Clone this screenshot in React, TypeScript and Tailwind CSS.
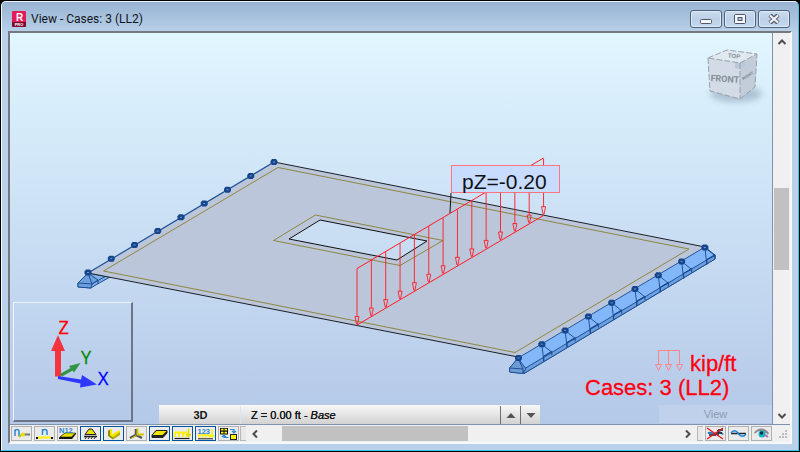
import React from "react";
import clsx from "clsx";

const slabSupports = Array.from({ length: 9 }, (_, i) => i);
const loadArrows = Array.from({ length: 14 }, (_, i) => i);

const displayTools = [
  {
    label: "Node numbers",
    active: false,
    icon: (
      <>
        <path d="M3 9V2.500M3 4C3.500 2 7 2 7 4.500V9.500" stroke="#2b87d1" strokeWidth="1.500" fill="none" />
        <path d="M7 10L10 7.500" stroke="#c8c800" strokeWidth="2" />
        <path d="M12 7.500H18" stroke="#777" strokeWidth="2" />
        <circle cx="11" cy="7.500" r="2" fill="#e6e000" />
      </>
    ),
  },
  {
    label: "Bar numbers",
    active: false,
    icon: (
      <>
        <path d="M7.500 8V2M7.500 4C8 1.800 12 1.800 12 4.500V8" stroke="#2b87d1" strokeWidth="1.500" fill="none" />
        <path d="M3 10.500H16" stroke="#fff200" strokeWidth="2" />
        <path d="M1 11h2M16 11h2" stroke="#111" strokeWidth="2" />
      </>
    ),
  },
  {
    label: "Panel numbers",
    active: false,
    icon: (
      <>
        <path d="M7 6H18V7L14 12H1V10.500Z" fill="#111" />
        <path d="M7 6H17.500L13.500 10H2Z" fill="#e6e000" stroke="#222" strokeWidth=".6" />
        <text x="1" y="6" fontSize="7.500" fontWeight="bold" fill="#2b87d1">N12</text>
      </>
    ),
  },
  {
    label: "Supports",
    active: true,
    icon: (
      <>
        <path d="M8 2H11L15 7.500H4Z" fill="#e6e000" stroke="#222" />
        <path d="M3 9.500H16" stroke="#222" strokeWidth="1.500" />
        <path d="M4 12l1.500-2M7 12l1.500-2M10 12l1.500-2M13 12l1.500-2" stroke="#222" />
      </>
    ),
  },
  {
    label: "Sections",
    active: true,
    icon: (
      <>
        <path d="M5 3L8 1.500V7L16 3V7L9 12L5 9Z" fill="#f2e900" />
        <path d="M4 3.500L6 3V8.500L9 10.500V12.500L4 9Z" fill="#918b00" />
        <path d="M9 10L16 5V8L9 12.500Z" fill="#b6ae00" />
      </>
    ),
  },
  {
    label: "Local axes",
    active: false,
    icon: (
      <>
        <path d="M9 2V8M3 11L9 8L15 11" stroke="#555" strokeWidth="2.500" fill="none" />
        <path d="M10.500 1.500V7.500H17" stroke="#d0c800" strokeWidth="2" fill="none" />
        <path d="M4 11.500L9 8.500" stroke="#d0c800" />
      </>
    ),
  },
  {
    label: "Panel thickness",
    active: true,
    icon: (
      <>
        <path d="M6 3.500H17V6L13 10.500H2V8Z" fill="#222" stroke="#222" />
        <path d="M6.500 4H16.500L12.500 8H2.500Z" fill="#f2e900" />
      </>
    ),
  },
  {
    label: "Loads",
    active: true,
    icon: (
      <>
        <path d="M2 10V5.500H13.500V10M6 5.500V10M10 5.500V10" stroke="#fff200" strokeWidth="1.800" fill="none" />
        <path d="M15.500 1.500V9M13.500 7L15.500 9.500L17.500 7" stroke="#e6dc00" strokeWidth="1.500" fill="none" />
        <path d="M1.500 11.500H16.500" stroke="#222" strokeWidth="1.200" />
      </>
    ),
  },
  {
    label: "Load values",
    active: true,
    icon: (
      <>
        <path d="M3 10.500V8H13.500V10.500M6.500 8V10.500M10 8V10.500M16 2V10M14 8L16 10L18 8" stroke="#fff200" strokeWidth="1.500" fill="none" />
        <path d="M2 11.800H17" stroke="#222" />
        <text x="1.500" y="6.500" fontSize="7.500" fontWeight="bold" fill="#2b87d1">123</text>
      </>
    ),
  },
  {
    label: "Display attributes",
    active: false,
    icon: (
      <>
        <rect x="1" y="1" width="8" height="6.500" fill="#111" />
        <path d="M2 2.700h2.500M5.500 2.700h2.500M2 5.700h2.500M5.500 5.700h2.500" stroke="#fff200" strokeWidth="1.700" />
        <rect x="11.500" y="7.500" width="6" height="5" fill="#fff200" stroke="#222" />
        <path d="M11 2.500H15V5M13 4l2 2 2-2M9.500 10.500H5V8.500M3 10l2-2 2 2" stroke="#2b87d1" strokeWidth="1.200" fill="none" />
      </>
    ),
  },
];

const resultTools = [
  {
    label: "Hide results",
    icon: (
      <>
        <path d="M2 6.500C5 3.500 7 9 10 6.500S15 5 17 7.500" stroke="#2277bb" strokeWidth="2" fill="none" />
        <path d="M3 8H10M12 3H17M12 6H16M12 3V9" stroke="#222" strokeWidth="1.500" />
        <path d="M1 1L17 12M17 1L1 12" stroke="#e8101c" strokeWidth="1.200" />
      </>
    ),
  },
  {
    label: "Deformation",
    icon: (
      <>
        <path d="M2 6.500H17" stroke="#222" strokeWidth="1.500" />
        <path d="M2 6C4 3 7 3 9 6S14 11 17 7" stroke="#1687d9" strokeWidth="1.500" fill="none" />
      </>
    ),
  },
  {
    label: "View settings",
    icon: (
      <>
        <path d="M2 6C5 0 13 0 17 6L15 9C12 4 7 4 4 7Z" fill="#8f8b90" />
        <path d="M3 7C6 3 12 3 16 8C12 12 6 11 3 7Z" fill="#e9e9ee" />
        <circle cx="10" cy="7" r="3.500" fill="#15b5bd" />
        <circle cx="9.500" cy="6" r="1.700" fill="#152b4d" />
        <path d="M13 8L16 10" stroke="#b86bb0" strokeWidth="2" />
      </>
    ),
  },
];

interface ToolProps {
  label: string;
  active?: boolean;
  icon: React.ReactNode;
}

const ToolButton = ({ label, active, icon }: ToolProps) => {
  return (
    <button
      aria-label={label}
      className={clsx(
        "w-[21px] h-[15px] border bg-[#ebebeb] shrink-0",
        active ? "border-[#00539f]" : "border-[#b0b0b0]"
      )}
    >
      <svg viewBox="0 0 19 13" className="block w-full h-full font-['Liberation_Sans',sans-serif]">
        {icon}
      </svg>
    </button>
  );
};

const Chevron = ({ d }: { d: string }) => (
  <svg viewBox="0 0 10 10" className="w-2.5 h-2.5" fill="none" stroke="#4d4d4d" strokeWidth="2">
    <path d={d} />
  </svg>
);

const TitleBar = () => {
  const buttonClass =
    "w-8 h-[18px] rounded-[3px] border border-[#50617c] bg-linear-to-b from-[#cbdcee] via-[#bcd0e7] to-[#c4d8ee] shadow-[inset_0_0_0_1px_#dceafa] flex items-center justify-center";
  return (
    <header className="h-[29px] flex items-center justify-between pt-1 pl-1 pr-0.5 shrink-0">
      <div className="flex items-center gap-[5px]">
        <svg viewBox="0 0 14 16" className="w-3.5 h-4 font-['Liberation_Sans',sans-serif]">
          <rect width="14" height="16" rx="1" fill="#e31b56" />
          <path d="M0 11H14V15a1 1 0 0 1-1 1H1a1 1 0 0 1-1-1Z" fill="#7d0b32" />
          <text x="7.500" y="9.500" fontSize="10" fontWeight="bold" fill="#fff" textAnchor="middle">R</text>
          <text x="7" y="14.500" fontSize="4" fontWeight="bold" fill="#fff" textAnchor="middle">PRO</text>
        </svg>
        <h1 className="text-[12px] leading-4 text-[#10151c]">View - Cases: 3 (LL2)</h1>
      </div>
      <div className="flex gap-0.5">
        <button aria-label="Minimize" className={buttonClass}>
          <svg viewBox="0 0 12 10" className="w-3 h-2.5">
            <rect x=".5" y="5.500" width="11" height="4" rx="1" fill="#f5f7fa" stroke="#4f5868" />
          </svg>
        </button>
        <button aria-label="Maximize" className={buttonClass}>
          <svg viewBox="0 0 12 10" className="w-3 h-2.5">
            <rect x=".5" y=".5" width="11" height="9" rx="1" fill="#f5f7fa" stroke="#4f5868" />
            <rect x="4" y="3.500" width="4" height="3" fill="#a9c3e2" stroke="#4f5868" />
          </svg>
        </button>
        <button aria-label="Close" className={clsx(buttonClass, "border-[#8da3c0]")}>
          <svg viewBox="0 0 12 10" className="w-3 h-2.5">
            <path d="M2 1L10 9M10 1L2 9" stroke="#5c6370" strokeWidth="4.500" />
            <path d="M2 1.500L10 8.500M10 1.500L2 8.500" stroke="#f1f3f6" strokeWidth="2.200" />
          </svg>
        </button>
      </div>
    </header>
  );
};

const ViewCube = () => (
  <g>
    <ellipse cx="736" cy="94" rx="26" ry="8" fill="#7f95ab" opacity=".5" filter="url(#cubeShadow)" />
    <path d="M708 58L740 63L740 99L710 91Z" fill="#d3dce6" />
    <path d="M708 58L727 50L757 54L740 63Z" fill="#e0e8f0" />
    <path d="M740 63L757 54L755 87L740 99Z" fill="#c3cdd9" />
    <path d="M735 62l5 1v6l-5-1zM741 62l4-2v6l-4 2z" fill="#b9c9da" />
    <path
      d="M708 58L727 50L757 54L740 63ZM708 58L710 91L740 99L755 87L757 54M740 63V99"
      fill="none"
      stroke="#98a0aa"
      strokeDasharray="6 2"
    />
    <text x="725" y="82" fontSize="9" fontWeight="bold" fill="#858e99" textAnchor="middle" transform="rotate(4 725 78)" fontFamily="Roboto, sans-serif">FRONT</text>
    <text x="748" y="77" fontSize="4" fontWeight="bold" fill="#737d89" textAnchor="middle" transform="rotate(-33 748 76)">RIGHT</text>
    <text x="734" y="58" fontSize="6" fontWeight="bold" fill="#858e99" textAnchor="middle" transform="rotate(6 734 56)">TOP</text>
  </g>
);

const SupportNode = ({ x, y }: { x: number; y: number }) => (
  <g>
    <path d={`M${x - 2} ${y - 3}h4l1.500 2v2l-1.500 2h-4l-1.500-2v-2z`} fill="#16458c" />
    <path d={`M${x - 1} ${y}h2`} stroke="#6f9cd8" />
  </g>
);

const Model = () => (
  <svg
    viewBox="10 33 762 391"
    className="absolute inset-0 w-full h-full font-['Liberation_Sans',Arial,sans-serif]"
  >
    <defs>
      <filter id="cubeShadow" x="-30%" y="-80%" width="160%" height="260%">
        <feGaussianBlur stdDeviation="3" />
      </filter>
    </defs>

    <ViewCube />

    {/* left linear support */}
    <g stroke="#1d4f96" fill="#7fb0ea" strokeLinejoin="round">
      <path d="M88 273L110 277L94 286L91 288L78 287V283Z" />
      <path
        d="M88 273L78 283L92 284L98 280Z M78 283V287L91 288L92 284M92 284L106 276M88 273L92 284M98 280V284"
        fill="#6c9fdc"
      />
    </g>

    {/* slab with its opening */}
    <path
      d="M88 273L274 162L705 247L518 357ZM320 220L289 239L397 260L427 241Z"
      fill="#bcc6da"
      fillRule="evenodd"
    />
    <g fill="none">
      <path d="M274 162L705 247M88 273L518 357" stroke="#1b1f27" />
      <path d="M320 220L289 239L397 260L427 241Z" stroke="#111" />
      <path d="M278 167.500L689 249L515 352.500L103.500 271Z" stroke="#8c8742" />
      <path d="M315.500 215L443 240.500L400 265.500L273.500 240.500Z" stroke="#8c8742" />
      <path d="M88 273L274 162" stroke="#1d4f96" strokeWidth="1.200" />
    </g>
    {slabSupports.map((i) => (
      <SupportNode key={i} x={88 + i * 23.25} y={272.5 - i * 13.8} />
    ))}

    {/* right linear support */}
    <g stroke="#17468c" strokeWidth=".9" strokeLinejoin="round">
      <path d="M518 358L705 247L715 255V259L524 373.500L510 372V368Z" fill="#82b8fa" />
      <path d="M524 369L715 255V259L524 373.500Z" fill="#6b9fe0" />
      <path d="M518 358L509.500 368V372L522 373.500L526 369Z" fill="#6d9bd4" />
      <path d="M509.500 368L523 369V373M518 358L523 369" fill="none" />
      {slabSupports.slice(1).map((i) => {
        const x = 518.5 + i * 23.3;
        const y = 358 - i * 13.8;
        return (
          <path
            key={i}
            d={`M${x} ${y}l2 17v-5l8 -5v4M${x} ${y}l10 8M${x + 2} ${y + 12}l8 -4`}
            fill="none"
          />
        );
      })}
    </g>
    {slabSupports.map((i) => (
      <SupportNode key={i} x={518.5 + i * 23.3} y={358 - i * 13.8} />
    ))}

    {/* linear load */}
    <path d="M451 193L450 213" stroke="#111" />
    <g stroke="#ff1a24" fill="none">
      <path d="M357 268.500L543.500 158M357 325L543.500 215.500" />
      {loadArrows.map((i) => {
        const x = 357 + i * 14.35;
        const y = 325 - i * 8.45;
        return (
          <path
            key={i}
            d={`M${x} ${y - 56.5}V${y - 8.5}M${x - 2} ${y - 8.5}h4l-1.500 7.500h-1z`}
            strokeWidth=".9"
          />
        );
      })}
    </g>
    <rect x="451.500" y="165.500" width="108" height="27" fill="#c8dcff" stroke="#ff7482" />
    <text x="462" y="189" fontSize="21" fill="#101216">pZ=-0.20</text>

    {/* unit and case legend */}
    <g fill="none" stroke="#ff858c">
      <path d="M658.500 364V350.500H679.500V364M668.500 350V364" />
      <path d="M655.500 364.500h6l-3 6zM665.500 364.500h6l-3 6zM676.500 364.500h6l-3 6z" />
    </g>
    <g fill="#ff0010" stroke="#ff0010" strokeWidth=".3" fontSize="22">
      <text x="690" y="371">kip/ft</text>
      <text x="585" y="395">Cases: 3 (LL2)</text>
    </g>
  </svg>
);

const AxisPanel = () => (
  <div className="absolute bottom-0.5 left-[3px] w-[120px] h-[120px] border-t border-l border-b-2 border-r-2 border-t-[#edf4fd] border-l-[#edf4fd] border-b-[#6c7587] border-r-[#6c7587]">
    <svg viewBox="14 303 117 117" className="w-full h-full font-['Open_Sans',sans-serif]">
      <path d="M55 376.500V351H51L58 335L65 351H61V376.500Z" fill="#f5333f" />
      <path d="M60 374L70.500 368L69 366L80.500 363L74 372.500L72.500 370.500L62 376.500Z" fill="#309440" />
      <path d="M58 376L81 379.500L82 375L97 384.500L80 387.500L80.500 383.500L58 379Z" fill="#3038ff" />
      <g fontSize="18" strokeWidth=".3">
        <text x="58.500" y="333.500" fill="#f00" stroke="#f00">Z</text>
        <text x="81" y="363.500" fill="#008a00" stroke="#008a00">Y</text>
        <text x="98" y="385" fill="#0000ff" stroke="#0000ff">X</text>
      </g>
    </svg>
  </div>
);

const StoreyBar = () => (
  <div className="absolute bottom-0 left-[149px] w-[50%] h-[19px] flex text-[11px] text-[#151515] border-t border-[#f8fafd] *:bg-linear-to-b *:from-[#f6f6f6] *:to-[#d2d2d2] font-['Liberation_Sans',Arial,sans-serif]">
    <button className="w-[81px] font-bold pl-0.5">3D</button>
    <button className="flex-1 text-left pl-2.5 border-l border-[#d9e4f3] [text-shadow:0_0_0_#000]">
      Z = 0.00 ft - <i>Base</i>
    </button>
    <button aria-label="Storey up" className="w-5 border-l border-[#6e6e6e] flex items-center justify-center">
      <svg viewBox="0 0 10 5" className="w-2.5 h-[5px]" fill="#555">
        <path d="M5 0L9.500 5H.5Z" />
      </svg>
    </button>
    <button aria-label="Storey down" className="w-5 border-l border-[#6e6e6e] flex items-center justify-center">
      <svg viewBox="0 0 10 5" className="w-2.5 h-[5px]" fill="#555">
        <path d="M5 5L9.500 0H.5Z" />
      </svg>
    </button>
  </div>
);

const VerticalScroll = () => (
  <div className="w-[18px] shrink-0 border-l border-[#7f92ae] bg-[#f0f0f0] flex flex-col items-center">
    <button aria-label="Scroll up" className="h-[17px] flex items-center">
      <Chevron d="M1.500 7L5 3.500L8.500 7" />
    </button>
    <div className="flex-1 w-full flex flex-col px-px">
      <div className="grow-[138]" />
      <div className="grow-[82] bg-[#c1c1c1]" />
      <div className="grow-[137]" />
    </div>
    <button aria-label="Scroll down" className="h-[17px] flex items-center">
      <Chevron d="M1.500 3L5 6.500L8.500 3" />
    </button>
  </div>
);

const BottomBar = () => (
  <footer className="h-[18px] shrink-0 border-t border-[#7f92ae] bg-[#f0f0f0] flex items-center pl-px">
    <div className="flex gap-0.5">
      {displayTools.map((tool) => (
        <ToolButton key={tool.label} {...tool} />
      ))}
    </div>
    <div className="w-[6px] h-[15px] ml-px border border-r-0 border-[#b8b8b8] bg-[#e8e8e8]" />
    <div className="flex-1 h-[15px] flex items-center">
      <button aria-label="Scroll left" className="w-[18px] flex justify-center">
        <Chevron d="M7 1.500L3.500 5L7 8.500" />
      </button>
      <div className="flex-1 h-full flex">
        <div className="grow-[18]" />
        <div className="grow-[186] bg-[#c1c1c1]" />
        <div className="grow-[211]" />
      </div>
      <button aria-label="Scroll right" className="w-[18px] flex justify-center">
        <Chevron d="M3 1.500L6.500 5L3 8.500" />
      </button>
    </div>
    <div className="w-[6px] h-[15px] mr-0.5 border border-r-0 border-[#b8b8b8] bg-[#e8e8e8]" />
    <div className="flex gap-0.5">
      {resultTools.map((tool) => (
        <ToolButton key={tool.label} {...tool} />
      ))}
    </div>
    <svg viewBox="0 0 18 15" className="w-[18px] h-[15px]" fill="#bdbdbd">
      <path d="M13 4h2v2h-2zM10 7h2v2h-2zM13 7h2v2h-2zM7 10h2v2H7zM10 10h2v2h-2zM13 10h2v2h-2z" />
    </svg>
  </footer>
);

const App = () => {
  return (
    <div className="h-screen bg-black p-px font-[Roboto,'Open_Sans',sans-serif]">
      <div className="h-full flex flex-col rounded-t-[5px] border border-t-[#e6f1fc] border-l-[#f2f8fe] border-r-[#35c6e8] border-b-[#35c6e8] bg-[#b9d1ea] bg-linear-to-b from-[#98b4d2] to-[#b9d1ea] to-[31px] px-1.5 pb-1.5">
        <TitleBar />
        <main className="flex-1 min-h-0 flex flex-col border-2 border-t-[#75797f] border-l-[#75797f] border-r-[#f7f9fb] border-b-[#f7f9fb]">
          <div className="flex-1 min-h-0 flex">
            <section className="relative flex-1 min-w-0 overflow-hidden bg-linear-to-b from-[#e1f6ff] to-[#b4c8e8]">
              <Model />
              <AxisPanel />
              <StoreyBar />
              <button className="absolute bottom-px right-0 w-[113px] h-[18px] bg-[#c0d1eb] text-[11px] text-[#8b9ab2] font-['Liberation_Sans',Arial,sans-serif]">
                View
              </button>
            </section>
            <VerticalScroll />
          </div>
          <BottomBar />
        </main>
      </div>
    </div>
  );
};

export default App;
